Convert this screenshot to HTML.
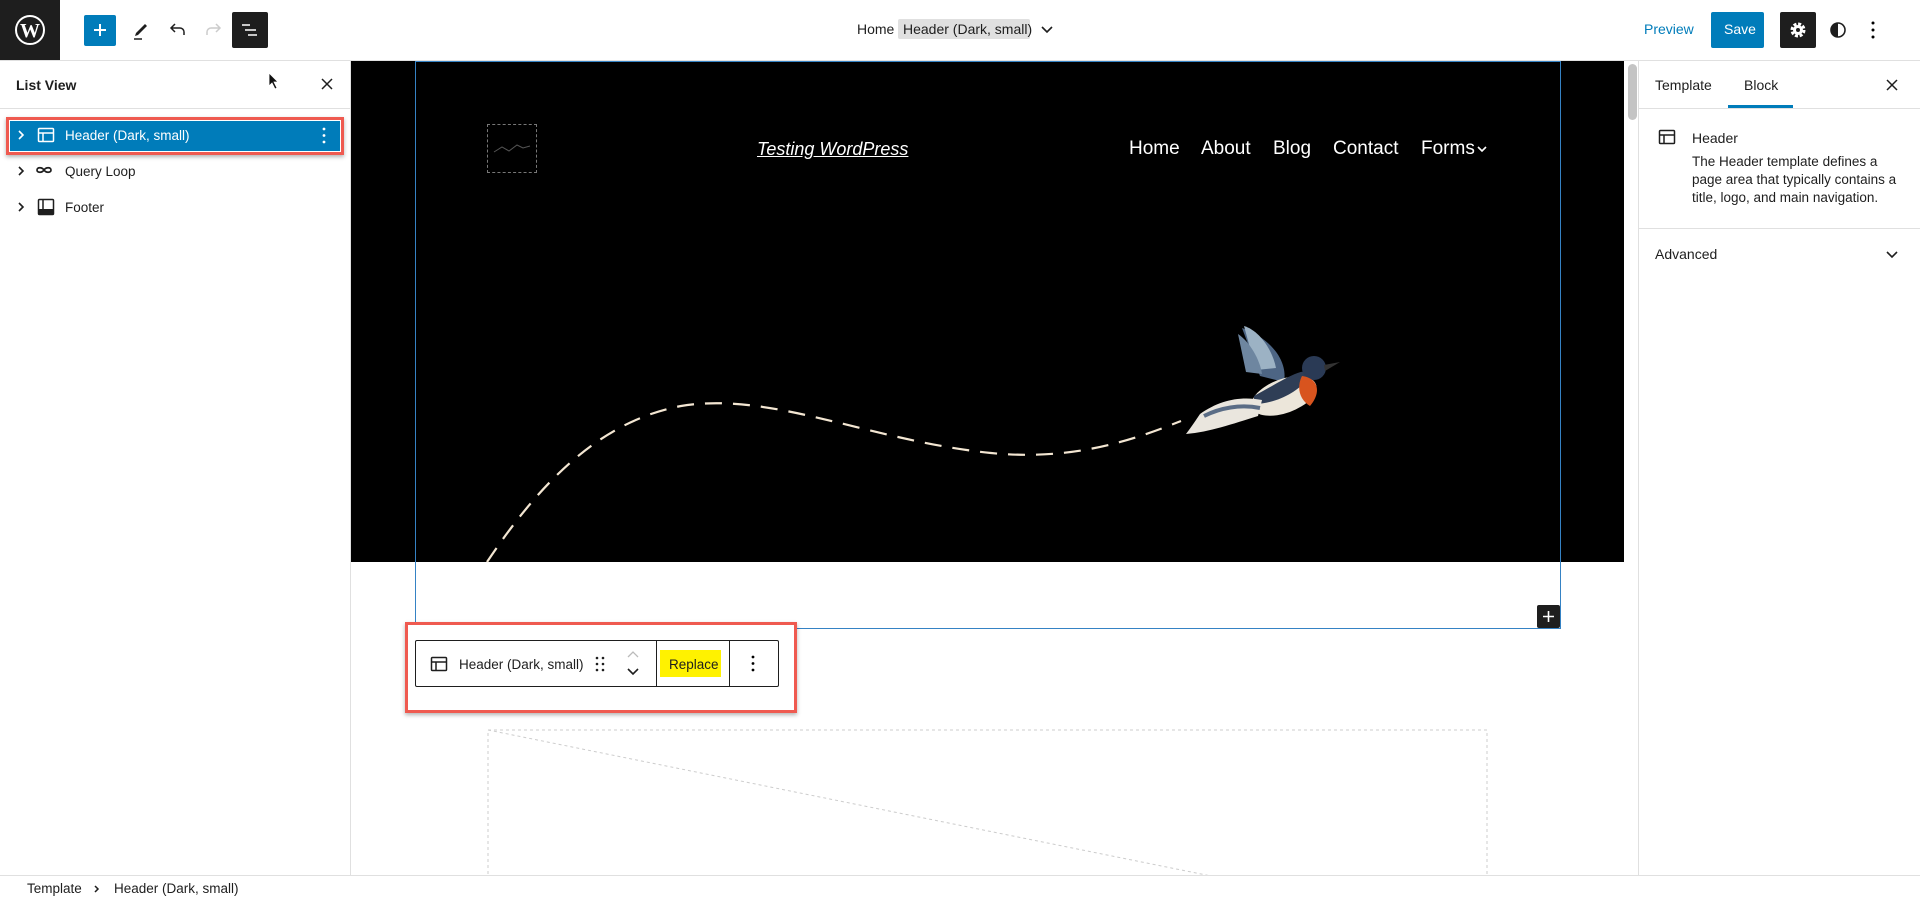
<!DOCTYPE html>
<html><head><meta charset="utf-8"><style>
*{box-sizing:border-box;margin:0;padding:0}
body{width:1920px;height:900px;overflow:hidden;background:#fff;font-family:"Liberation Sans",sans-serif;color:#1e1e1e;position:relative;font-size:16px}
.a{position:absolute}
.t{position:absolute;white-space:nowrap;line-height:1}
</style></head><body>
<div class="a" style="left:0;top:0;width:1920px;height:61px;border-bottom:1px solid #e0e0e0"></div>
<div class="a" style="left:0;top:0;width:60px;height:60px;background:#1e1e1e"></div>
<svg class="a" style="left:14px;top:14px" width="32" height="32" viewBox="0 0 32 32"><circle cx="16" cy="16" r="14" fill="none" stroke="#fff" stroke-width="2"/><text x="16" y="23" font-family="Liberation Serif" font-weight="bold" font-size="20" fill="#fff" text-anchor="middle">W</text></svg>
<div class="a" style="left:84px;top:15px;width:32px;height:31px;background:#007cba;border-radius:2px"></div>
<svg class="a" style="left:88px;top:18px" width="24" height="24"><path d="M12 6v12M6 12h12" stroke="#fff" stroke-width="2"/></svg>
<svg class="a" style="left:129px;top:18px" width="24" height="24"><path d="M7 15l9-9 2 2-9 9-3 1z" fill="#1e1e1e"/><path d="M5 21h8" stroke="#1e1e1e" stroke-width="1.5"/></svg>
<svg class="a" style="left:166px;top:18px" width="24" height="24"><path d="M18 17v-3a4 4 0 0 0-4-4H6M9 6l-4 4 4 4" fill="none" stroke="#1e1e1e" stroke-width="1.5"/></svg>
<svg class="a" style="left:201px;top:18px" width="24" height="24"><path d="M6 17v-3a4 4 0 0 1 4-4h8M15 6l4 4-4 4" fill="none" stroke="#ccc" stroke-width="1.5"/></svg>
<div class="a" style="left:232px;top:12px;width:36px;height:36px;background:#1e1e1e;border-radius:2px"></div>
<svg class="a" style="left:238px;top:18px" width="24" height="24"><path d="M4 7h8M7 12h11M10 17h9" stroke="#fff" stroke-width="1.6"/></svg>
<div class="t" style="left:857px;top:22px;font-size:14px">Home</div>
<div class="a" style="left:898px;top:19px;width:132px;height:20px;background:#e0e0e0;border-radius:2px"></div>
<div class="t" style="left:903px;top:22px;font-size:14px">Header (Dark, small)</div>
<svg class="a" style="left:1038px;top:20px" width="18" height="18"><path d="M4 7l5 5 5-5" fill="none" stroke="#1e1e1e" stroke-width="1.6"/></svg>
<div class="t" style="left:1644px;top:22px;font-size:14px;color:#007cba">Preview</div>
<div class="a" style="left:1711px;top:12px;width:53px;height:36px;background:#007cba;border-radius:2px"></div>
<div class="t" style="left:1724px;top:22px;font-size:14px;color:#fff">Save</div>
<div class="a" style="left:1780px;top:12px;width:36px;height:36px;background:#1e1e1e;border-radius:2px"></div>
<svg class="a" style="left:1787px;top:19px" width="22" height="22" viewBox="0 0 22 22"><circle cx="11" cy="11" r="6" fill="none" stroke="#fff" stroke-width="3" stroke-dasharray="3 1.7"/><circle cx="11" cy="11" r="5" fill="#fff"/><circle cx="11" cy="11" r="2" fill="#1e1e1e"/></svg>
<svg class="a" style="left:1828px;top:20px" width="20" height="20"><circle cx="10" cy="10" r="7" fill="none" stroke="#1e1e1e" stroke-width="1.6"/><path d="M10 3a7 7 0 0 0 0 14z" fill="#1e1e1e"/></svg>
<svg class="a" style="left:1864px;top:18px" width="18" height="24"><circle cx="9" cy="5" r="1.5"/><circle cx="9" cy="12" r="1.5"/><circle cx="9" cy="19" r="1.5"/></svg>

<div class="a" style="left:350px;top:61px;width:1px;height:815px;background:#e0e0e0"></div>
<div class="t" style="left:16px;top:78px;font-size:14px;font-weight:bold">List View</div>
<svg class="a" style="left:268px;top:72px" width="12" height="20"><path d="M1 1v13l3-3 3 6 2-1-3-6h4z" fill="#111" stroke="#fff" stroke-width=".8"/></svg>
<svg class="a" style="left:319px;top:76px" width="16" height="16"><path d="M3 3l10 10M13 3L3 13" stroke="#1e1e1e" stroke-width="1.5"/></svg>
<div class="a" style="left:0;top:108px;width:350px;height:1px;background:#e0e0e0"></div>
<div class="a" style="left:6px;top:117px;width:338px;height:38px;border:3px solid #ef5a50;box-shadow:0 2px 4px rgba(0,0,0,.3)"></div>
<div class="a" style="left:10px;top:121px;width:330px;height:30px;background:#007cba"></div>
<svg class="a" style="left:14px;top:128px" width="14" height="14"><path d="M5 3l4 4-4 4" fill="none" stroke="#fff" stroke-width="1.6"/></svg>
<svg class="a" style="left:36px;top:125px" width="20" height="20"><rect x="2.5" y="3.5" width="15" height="13" rx="1" fill="none" stroke="#fff" stroke-width="1.5"/><path d="M2.5 8h15M7 8v8.5" stroke="#fff" stroke-width="1.5"/></svg>
<div class="t" style="left:65px;top:129px;font-size:13.5px;color:#fff">Header (Dark, small)</div>
<svg class="a" style="left:318px;top:126px" width="12" height="20"><circle cx="6" cy="3" r="1.4" fill="#fff"/><circle cx="6" cy="9.5" r="1.4" fill="#fff"/><circle cx="6" cy="16" r="1.4" fill="#fff"/></svg>
<svg class="a" style="left:14px;top:164px" width="14" height="14"><path d="M5 3l4 4-4 4" fill="none" stroke="#1e1e1e" stroke-width="1.6"/></svg>
<svg class="a" style="left:35px;top:162px" width="20" height="16"><path d="M9 8c-2-3-7-3-7 0s5 3 7 0 7-3 7 0-5 3-7 0" fill="none" stroke="#1e1e1e" stroke-width="1.7"/></svg>
<div class="t" style="left:65px;top:165px;font-size:13.5px">Query Loop</div>
<svg class="a" style="left:14px;top:200px" width="14" height="14"><path d="M5 3l4 4-4 4" fill="none" stroke="#1e1e1e" stroke-width="1.6"/></svg>
<svg class="a" style="left:36px;top:197px" width="20" height="20"><rect x="2.5" y="2.5" width="15" height="15" rx="1" fill="none" stroke="#1e1e1e" stroke-width="1.5"/><rect x="2.5" y="12" width="15" height="5.5" fill="#1e1e1e"/><path d="M7 3v9" stroke="#1e1e1e" stroke-width="1.5"/></svg>
<div class="t" style="left:65px;top:201px;font-size:13.5px">Footer</div>

<div class="a" style="left:351px;top:61px;width:1273px;height:501px;background:#000"></div>
<svg class="a" style="left:351px;top:61px" width="1273" height="815">
<path d="M136 501 C 190 420, 250 360, 330 345 C 420 330, 520 380, 640 392 C 720 400, 780 380, 830 360" fill="none" stroke="#f3e6d2" stroke-width="2.2" stroke-dasharray="17 11"/>
<rect x="137" y="669" width="999" height="150" fill="none" stroke="#ccc" stroke-dasharray="3 3"/>
<path d="M137 669 L860 815" stroke="#ccc" stroke-dasharray="3 3"/>
</svg>
<svg class="a" style="left:1180px;top:320px" width="172" height="124" viewBox="0 0 172 124">
<path d="M62 8 C 90 18, 108 40, 104 62 L 80 56 Z" fill="#4d6584"/>
<path d="M64 6 C 78 10, 92 28, 96 48 L 76 50 Z" fill="#9cb2c4"/>
<path d="M58 14 C 70 22, 80 40, 82 54 L 66 52 Z" fill="#6e86a0"/>
<ellipse cx="104" cy="76" rx="34" ry="17" fill="#ece6da" transform="rotate(-20 104 76)"/>
<path d="M74 76 C 100 62, 120 48, 130 52 C 128 66, 100 84, 74 84Z" fill="#2f3e56"/>
<circle cx="134" cy="48" r="12" fill="#2a3a55"/>
<path d="M122 56 C 138 58, 142 72, 130 86 C 120 80, 116 68, 122 56Z" fill="#d8541e"/>
<path d="M144 45 L160 42 L145 51Z" fill="#333"/>
<path d="M20 94 C 40 80, 60 76, 82 80 L 78 96 C 52 104, 30 112, 6 114 C 12 106, 16 100, 20 94Z" fill="#eae6de"/>
<path d="M24 96 C 40 88, 60 84, 80 88" stroke="#5b6d86" stroke-width="4" fill="none"/>
</svg>
<div class="a" style="left:487px;top:124px;width:50px;height:49px;border:1px dashed #777"></div>
<svg class="a" style="left:492px;top:140px" width="40" height="16"><path d="M2 12l8-5 7 4 8-6 6 3 7-2" fill="none" stroke="#555" stroke-width="1"/></svg>
<div class="t" style="left:757px;top:140px;font-size:18px;font-style:italic;color:#fff;text-decoration:underline">Testing WordPress</div>
<div class="t" style="left:1129px;top:139px;font-size:19px;color:#fff">Home</div>
<div class="t" style="left:1201px;top:139px;font-size:19px;color:#fff">About</div>
<div class="t" style="left:1273px;top:139px;font-size:19px;color:#fff">Blog</div>
<div class="t" style="left:1333px;top:139px;font-size:19px;color:#fff">Contact</div>
<div class="t" style="left:1421px;top:139px;font-size:19px;color:#fff">Forms</div>
<svg class="a" style="left:1475px;top:142px" width="14" height="14"><path d="M3 5l4 4 4-4" fill="none" stroke="#fff" stroke-width="1.6"/></svg>
<div class="a" style="left:415px;top:61px;width:1146px;height:568px;border:1.5px solid #3582c4"></div>
<div class="a" style="left:1537px;top:605px;width:23px;height:23px;background:#1e1e1e;border-radius:2px"></div>
<svg class="a" style="left:1540px;top:608px" width="17" height="17"><path d="M8.5 3v11M3 8.5h11" stroke="#fff" stroke-width="1.6"/></svg>
<div class="a" style="left:1628px;top:64px;width:9px;height:56px;background:#c4c4c4;border-radius:5px"></div>
<div class="a" style="left:405px;top:622px;width:392px;height:91px;border:3px solid #ef5a50;box-shadow:0 2px 4px rgba(0,0,0,.3);background:#fff"></div>
<div class="a" style="left:415px;top:640px;width:364px;height:47px;border:1px solid #1e1e1e;border-radius:2px;background:#fff"></div>
<div class="a" style="left:656px;top:641px;width:1px;height:46px;background:#1e1e1e"></div>
<div class="a" style="left:729px;top:641px;width:1px;height:46px;background:#1e1e1e"></div>
<svg class="a" style="left:429px;top:654px" width="20" height="20"><rect x="2.5" y="3.5" width="15" height="13" rx="1" fill="none" stroke="#1e1e1e" stroke-width="1.5"/><path d="M2.5 8h15M7 8v8.5" stroke="#1e1e1e" stroke-width="1.5"/></svg>
<div class="t" style="left:459px;top:658px;font-size:13.5px">Header (Dark, small)</div>
<svg class="a" style="left:594px;top:654px" width="12" height="20"><g fill="#1e1e1e"><circle cx="3" cy="4" r="1.3"/><circle cx="9" cy="4" r="1.3"/><circle cx="3" cy="10" r="1.3"/><circle cx="9" cy="10" r="1.3"/><circle cx="3" cy="16" r="1.3"/><circle cx="9" cy="16" r="1.3"/></g></svg>
<svg class="a" style="left:624px;top:648px" width="18" height="32"><path d="M4 9l5-5 5 5" fill="none" stroke="#bbb" stroke-width="1.3"/><path d="M4 21l5 5 5-5" fill="none" stroke="#1e1e1e" stroke-width="1.6"/></svg>
<div class="a" style="left:660px;top:650px;width:61px;height:27px;background:#fff200"></div>
<div class="t" style="left:669px;top:658px;font-size:13.5px">Replace</div>
<svg class="a" style="left:747px;top:654px" width="12" height="20"><circle cx="6" cy="3" r="1.4"/><circle cx="6" cy="9.5" r="1.4"/><circle cx="6" cy="16" r="1.4"/></svg>

<div class="a" style="left:1638px;top:61px;width:1px;height:815px;background:#e0e0e0"></div>
<div class="t" style="left:1655px;top:78px;font-size:14px">Template</div>
<div class="t" style="left:1744px;top:78px;font-size:14px">Block</div>
<div class="a" style="left:1728px;top:105px;width:65px;height:3px;background:#007cba"></div>
<svg class="a" style="left:1884px;top:77px" width="16" height="16"><path d="M3 3l10 10M13 3L3 13" stroke="#1e1e1e" stroke-width="1.5"/></svg>
<div class="a" style="left:1639px;top:108px;width:281px;height:1px;background:#e0e0e0"></div>
<svg class="a" style="left:1657px;top:127px" width="20" height="20"><rect x="2.5" y="3.5" width="15" height="13" rx="1" fill="none" stroke="#1e1e1e" stroke-width="1.5"/><path d="M2.5 8h15M7 8v8.5" stroke="#1e1e1e" stroke-width="1.5"/></svg>
<div class="t" style="left:1692px;top:131px;font-size:14px">Header</div>
<div class="a" style="left:1692px;top:153px;width:212px;font-size:13.5px;line-height:18px">The Header template defines a page area that typically contains a title, logo, and main navigation.</div>
<div class="a" style="left:1639px;top:228px;width:281px;height:1px;background:#e0e0e0"></div>
<div class="t" style="left:1655px;top:247px;font-size:14px">Advanced</div>
<svg class="a" style="left:1884px;top:246px" width="16" height="16"><path d="M3 6l5 5 5-5" fill="none" stroke="#1e1e1e" stroke-width="1.6"/></svg>

<div class="a" style="left:0;top:875px;width:1920px;height:25px;border-top:1px solid #e0e0e0;background:#fff"></div>
<div class="t" style="left:27px;top:882px;font-size:13.5px">Template</div>
<svg class="a" style="left:91px;top:882px" width="12" height="14"><path d="M4 4l3 3-3 3" fill="none" stroke="#1e1e1e" stroke-width="1.5"/></svg>
<div class="t" style="left:114px;top:882px;font-size:13.5px">Header (Dark, small)</div>
</body></html>
